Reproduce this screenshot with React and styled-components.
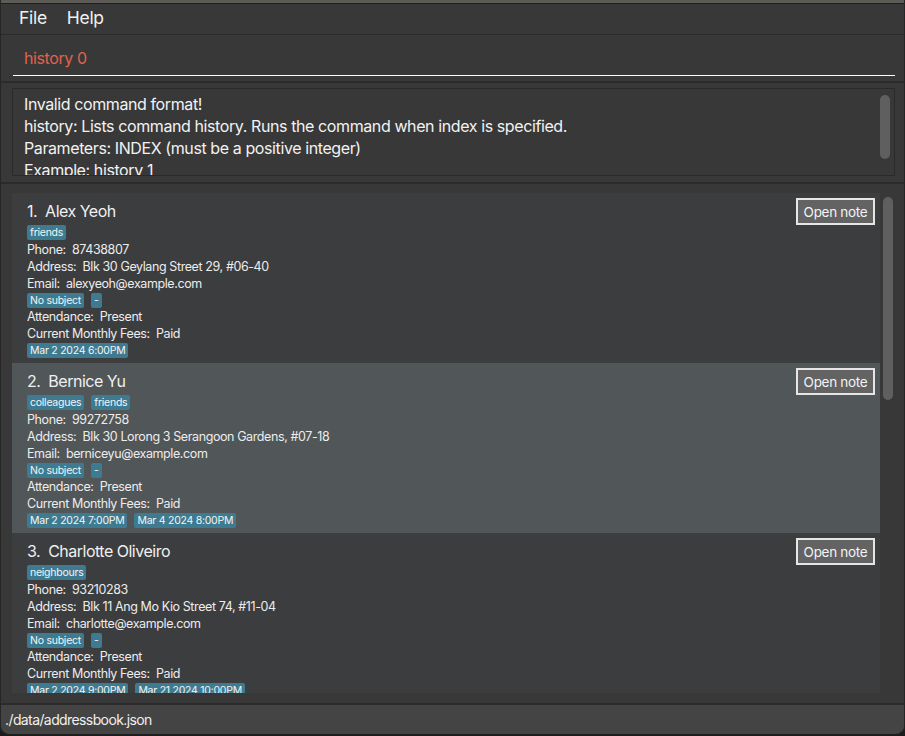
import React from "react";
import styled, { createGlobalStyle } from "styled-components";

const Global = createGlobalStyle`
  html, body { margin: 0; padding: 0; background: #1c1c1c; }
  body { font-family: Inter, "Liberation Sans", sans-serif; }
  * { box-sizing: border-box; }
`;

const Window = styled.div`
  width: 905px;
  height: 736px;
  display: flex;
  flex-direction: column;
  background: #383838;
  border-left: 1px solid #262626;
  border-right: 1px solid #262626;
  border-bottom: 2px solid #1e1e1e;
  border-radius: 0 0 10px 10px;
  overflow: hidden;
  color: #fff;
`;

const TopEdge = styled.div`
  height: 4px;
  background: #5d5b56;
  border-bottom: 1px solid #1f1f1f;
  flex: none;
`;

const MenuBar = styled.div`
  height: 31px;
  flex: none;
  display: flex;
  align-items: center;
  gap: 20px;
  padding: 0 0 4px 18px;
  border-bottom: 1px solid #2b2b2b;
  font-size: 17.5px;
  letter-spacing: -0.3px;
  color: #f0f0f0;
`;

const MenuItem = styled.span``;

const CommandPane = styled.div`
  height: 48px;
  flex: none;
  padding: 0 9px 5px 12px;
  display: flex;
  align-items: stretch;
  border-bottom: 2px solid #2b2b2b;
`;

const CommandField = styled.div`
  flex: 1;
  display: flex;
  align-items: center;
  padding: 6px 0 0 11px;
  border-bottom: 1px solid #ffffff;
  font-size: 16px;
  letter-spacing: -0.4px;
  color: #e0634b;
`;

const ResultPane = styled.div`
  height: 101px;
  flex: none;
  padding: 5px 9px 6px 11px;
  border-bottom: 2px solid #2b2b2b;
`;

const ResultBox = styled.div`
  height: 88px;
  border: 1px solid #2a2a2a;
  display: flex;
  overflow: hidden;
`;

const ResultText = styled.div`
  flex: 1;
  padding: 4px 0 0 11px;
  font-size: 16px;
  line-height: 22px;
  letter-spacing: -0.4px;
  color: #f2f2f2;
  overflow: hidden;
`;

const Scrollbar = styled.div`
  width: 10px;
  flex: none;
  height: ${(p) => p.$h}px;
  margin-top: ${(p) => p.$top}px;
  margin-right: ${(p) => p.$right || 0}px;
  border-radius: 5px;
  background: #5f5f5f;
`;

const ListPane = styled.div`
  flex: 1;
  min-height: 0;
  padding: 9px 11px 10px 11px;
  display: flex;
  gap: 3px;
`;

const ListViewport = styled.div`
  flex: 1;
  height: 500px;
  overflow: hidden;
  display: flex;
  flex-direction: column;
`;

const Card = styled.div`
  flex: none;
  height: 170px;
  background: ${(p) => (p.$selected ? "#515658" : "#3c3d3f")};
  padding: 5px 5px 5px 15px;
  display: flex;
  justify-content: space-between;
  align-items: flex-start;
`;

const CardBody = styled.div`
  display: flex;
  flex-direction: column;
`;

const Name = styled.div`
  height: 27px;
  line-height: 27px;
  font-size: 16px;
  letter-spacing: -0.5px;
  color: #f0f0f0;
  white-space: pre;
`;

const Line = styled.div`
  height: 17px;
  line-height: 17px;
  font-size: 12.5px;
  letter-spacing: -0.4px;
  color: #ececec;
  white-space: pre;
`;

const TagRow = styled.div`
  height: 16px;
  display: flex;
  gap: 7px;
  align-items: flex-start;
  padding-top: ${(p) => (p.$offset ? 1 : 0)}px;
`;

const Tag = styled.span`
  height: 15px;
  line-height: 15px;
  padding: 0 3px;
  background: #3e7b91;
  border-radius: 2px;
  font-size: 10.5px;
  letter-spacing: -0.25px;
  color: #f4f4f4;
  white-space: nowrap;
`;

const NoteButton = styled.button`
  width: 79px;
  height: 27px;
  background: #636363;
  border: 2px solid #e6e6e6;
  border-radius: 0;
  color: #f4f4f4;
  font-family: inherit;
  font-size: 13.5px;
  letter-spacing: -0.3px;
  padding: 0;
`;

const StatusBar = styled.div`
  height: 31px;
  flex: none;
  background: #444444;
  border-top: 2px solid #2b2b2b;
  display: flex;
  align-items: center;
  padding-left: 4px;
  font-size: 14px;
  letter-spacing: -0.6px;
  color: #f0f0f0;
`;

const people = [
  {
    name: "Alex Yeoh",
    tags: ["friends"],
    phone: "87438807",
    address: "Blk 30 Geylang Street 29, #06-40",
    email: "alexyeoh@example.com",
    dates: ["Mar 2 2024 6:00PM"],
  },
  {
    name: "Bernice Yu",
    tags: ["colleagues", "friends"],
    phone: "99272758",
    address: "Blk 30 Lorong 3 Serangoon Gardens, #07-18",
    email: "berniceyu@example.com",
    dates: ["Mar 2 2024 7:00PM", "Mar 4 2024 8:00PM"],
    selected: true,
  },
  {
    name: "Charlotte Oliveiro",
    tags: ["neighbours"],
    phone: "93210283",
    address: "Blk 11 Ang Mo Kio Street 74, #11-04",
    email: "charlotte@example.com",
    dates: ["Mar 2 2024 9:00PM", "Mar 21 2024 10:00PM"],
  },
];

function PersonCard({ p, index }) {
  return (
    <Card $selected={p.selected}>
      <CardBody>
        <Name>{`${index}.  ${p.name}`}</Name>
        <TagRow>
          {p.tags.map((t) => (
            <Tag key={t}>{t}</Tag>
          ))}
        </TagRow>
        <Line>{`Phone:  ${p.phone}`}</Line>
        <Line>{`Address:  ${p.address}`}</Line>
        <Line>{`Email:  ${p.email}`}</Line>
        <TagRow $offset>
          <Tag>No subject</Tag>
          <Tag>-</Tag>
        </TagRow>
        <Line>{`Attendance:  Present`}</Line>
        <Line>{`Current Monthly Fees:  Paid`}</Line>
        <TagRow $offset>
          {p.dates.map((d) => (
            <Tag key={d}>{d}</Tag>
          ))}
        </TagRow>
      </CardBody>
      <NoteButton>Open note</NoteButton>
    </Card>
  );
}

export default function App() {
  return (
    <>
      <Global />
      <Window>
        <TopEdge />
        <MenuBar>
          <MenuItem>File</MenuItem>
          <MenuItem>Help</MenuItem>
        </MenuBar>
        <CommandPane>
          <CommandField>history 0</CommandField>
        </CommandPane>
        <ResultPane>
          <ResultBox>
            <ResultText>
              <div>Invalid command format!</div>
              <div>history: Lists command history. Runs the command when index is specified.</div>
              <div>Parameters: INDEX (must be a positive integer)</div>
              <div>Example: history 1</div>
            </ResultText>
            <Scrollbar $h={64} $top={6} $right={4} />
          </ResultBox>
        </ResultPane>
        <ListPane>
          <ListViewport>
            {people.map((p, i) => (
              <PersonCard key={p.name} p={p} index={i + 1} />
            ))}
          </ListViewport>
          <Scrollbar $h={203} $top={4} />
        </ListPane>
        <StatusBar>./data/addressbook.json</StatusBar>
      </Window>
    </>
  );
}
